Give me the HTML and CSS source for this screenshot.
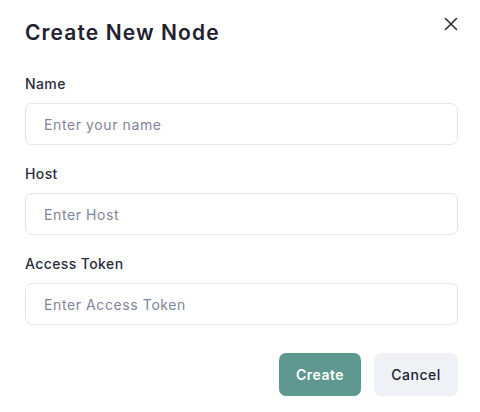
FILE: index.html
```html
<!DOCTYPE html>
<html>
<head>
<meta charset="utf-8">
<link rel="stylesheet" href="styles.css">
</head>
<body>
<div class="dialog">
  <div class="header">
    <h2 class="title">Create New Node</h2>
    <button class="close" aria-label="Close">
      <svg width="14" height="14" viewBox="0 0 14 14"><path d="M1.5 1.5 L12.5 12.5 M12.5 1.5 L1.5 12.5" stroke="#2b2d3a" stroke-width="1.6" stroke-linecap="round"/></svg>
    </button>
  </div>
  <div class="field">
    <label class="label">Name</label>
    <input class="input" placeholder="Enter your name">
  </div>
  <div class="field">
    <label class="label">Host</label>
    <input class="input" placeholder="Enter Host">
  </div>
  <div class="field">
    <label class="label">Access Token</label>
    <input class="input" placeholder="Enter Access Token">
  </div>
  <div class="actions">
    <button class="btn btn-primary">Create</button>
    <button class="btn btn-secondary">Cancel</button>
  </div>
</div>
</body>
</html>
```
FILE: styles.css
```css
* { box-sizing: border-box; }
html, body { margin: 0; padding: 0; background: #ffffff; }
body { font-family: "Inter", "Open Sans", sans-serif; color: #1f2130; }
.dialog { width: 480px; height: 412px; padding: 17px 22px 0 25px; }
.header { display: flex; justify-content: space-between; align-items: flex-start; margin-bottom: 27px; }
.title { margin: 1px 0 0 0; font-size: 21px; font-weight: 600; line-height: 30px; letter-spacing: 1.1px; color: #1f2130; }
.close { background: none; border: 0; padding: 0; margin: 0; width: 14px; height: 14px; display: flex; cursor: pointer; }
.field { display: flex; flex-direction: column; margin-bottom: 20px; }
.label { font-size: 14px; font-weight: 500; line-height: 18px; letter-spacing: 0.4px; color: #2b2d3a; margin-bottom: 10px; }
.input { height: 42px; width: 433px; border: 1px solid #e3e4ef; border-radius: 7px; padding: 0 18px; font-family: inherit; font-size: 14px; letter-spacing: 0.6px; color: #1f2130; background: #fff; outline: none; }
.input::placeholder { color: #80859a; }
.actions { display: flex; justify-content: flex-end; gap: 13px; margin-top: 28px; width: 433px; }
.btn { height: 43px; border: 0; border-radius: 7px; font-family: inherit; font-size: 14px; font-weight: 600; letter-spacing: 0.5px; padding: 0; cursor: pointer; }
.btn-primary { background: #5e9890; color: #ffffff; width: 82px; }
.btn-secondary { background: #eef1f6; color: #1f2130; font-weight: 500; width: 84px; }
```
